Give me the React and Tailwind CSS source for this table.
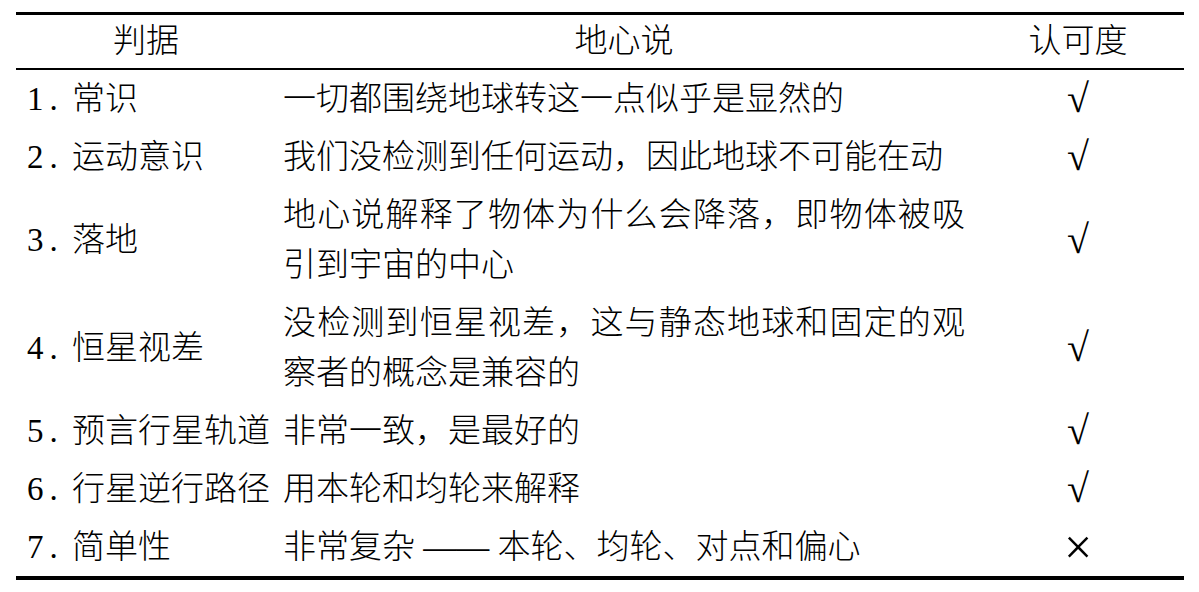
const ROWS = [
  { n: '1.', label: '常识', text: '一切都围绕地球转这一点似乎是显然的', mark: '√' },
  { n: '2.', label: '运动意识', text: '我们没检测到任何运动，因此地球不可能在动', mark: '√' },
  { n: '3.', label: '落地', text: '地心说解释了物体为什么会降落，即物体被吸引到宇宙的中心', mark: '√' },
  { n: '4.', label: '恒星视差', text: '没检测到恒星视差，这与静态地球和固定的观察者的概念是兼容的', mark: '√' },
  { n: '5.', label: '预言行星轨道', text: '非常一致，是最好的', mark: '√' },
  { n: '6.', label: '行星逆行路径', text: '用本轮和均轮来解释', mark: '√' },
  { n: '7.', label: '简单性', text: '非常复杂 —— 本轮、均轮、对点和偏心', mark: '×' },
]

function Row({ row }) {
  return (
    <div className="grid grid-cols-[260px_696px_212px] items-center py-[4px] leading-[50px]">
      <div className="pl-[11px] whitespace-nowrap">
        <span className="inline-block w-[45px] tracking-[6px]">{row.n}</span>
        {row.label}
      </div>
      <div className="px-[7px] text-justify">{row.text}</div>
      <div className={row.mark === '×' ? 'text-center text-[50px] leading-[50px] font-extralight' : 'text-center text-[40px] leading-[50px]'}>
        {row.mark}
      </div>
    </div>
  )
}

export default function App() {
  return (
    <div className="min-h-screen bg-white pt-[12px] pl-[16px] text-black text-[33px] font-light font-['Liberation_Serif','Noto_Sans_CJK_SC',serif]">
      <div className="w-[1168px] border-t-[3px] border-b-[4px] border-black">
        <div className="grid grid-cols-[260px_696px_212px] h-[55px] items-center text-center border-b-[2.5px] border-black">
          <div>判据</div>
          <div>地心说</div>
          <div>认可度</div>
        </div>
        {ROWS.map(r => <Row key={r.n} row={r} />)}
      </div>
    </div>
  )
}
